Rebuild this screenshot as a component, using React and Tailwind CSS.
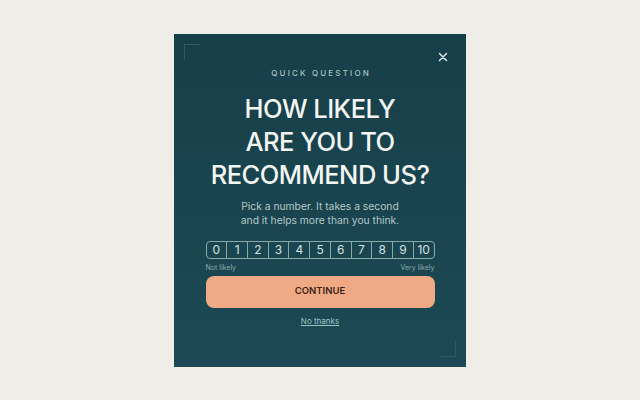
export default function App() {
  const nums = [0, 1, 2, 3, 4, 5, 6, 7, 8, 9, 10];
  return (
    <div className="w-[640px] h-[400px] bg-[#efede8] flex items-center justify-center" style={{ fontFamily: 'Inter, "Noto Sans", sans-serif' }}>
      <div className="relative w-[292px] h-[333px] bg-gradient-to-b from-[#173f49] to-[#1c4954] flex flex-col items-center pt-[34px]">
        <div className="absolute left-[10px] top-[10px] w-[16px] h-[16px] border-l border-t border-[#2f5860]" />
        <div className="absolute right-[10px] bottom-[10px] w-[16px] h-[16px] border-r border-b border-[#2f5860]" />
        <button className="absolute right-[18px] top-[18px] text-[#dbe8e7]">
          <svg width="10" height="10" viewBox="0 0 10 10" fill="none" stroke="currentColor" strokeWidth="1.5" strokeLinecap="round">
            <path d="M1.5 1.5l7 7M8.5 1.5l-7 7" />
          </svg>
        </button>
        <div className="text-[8px] leading-[10px] tracking-[0.27em] font-medium text-[#a7c3c3] pl-[0.27em]">QUICK QUESTION</div>
        <h1 className="mt-[14px] text-[25.5px] leading-[33px] font-medium tracking-[-0.02em] text-[#f3f6f3] text-center">
          HOW LIKELY<br />ARE YOU TO<br />RECOMMEND US?
        </h1>
        <p className="mt-[8px] text-[10.3px] leading-[14px] text-[#b3c8c7] text-center">
          Pick a number. It takes a second<br />and it helps more than you think.
        </p>
        <div className="mt-[14px] w-[229px] h-[18px] flex border border-[#85aaa8] rounded-[4px] overflow-hidden">
          {nums.map((n, i) => (
            <div key={n} className={`flex-1 flex items-center justify-center text-[12px] text-[#d3e2e0] ${i > 0 ? 'border-l border-[#85aaa8]' : ''}`}>{n}</div>
          ))}
        </div>
        <div className="mt-[4px] w-[229px] flex justify-between text-[7px] leading-[9px] text-[#8daaa9]">
          <span>Not likely</span>
          <span>Very likely</span>
        </div>
        <button className="mt-[4px] w-[229px] h-[32px] rounded-[8px] bg-[#f0a985] text-[9.5px] font-semibold text-[#3b1f14]">CONTINUE</button>
        <a className="mt-[8px] text-[8px] leading-[11px] underline text-[#9cc4c4]">No thanks</a>
      </div>
    </div>
  );
}
